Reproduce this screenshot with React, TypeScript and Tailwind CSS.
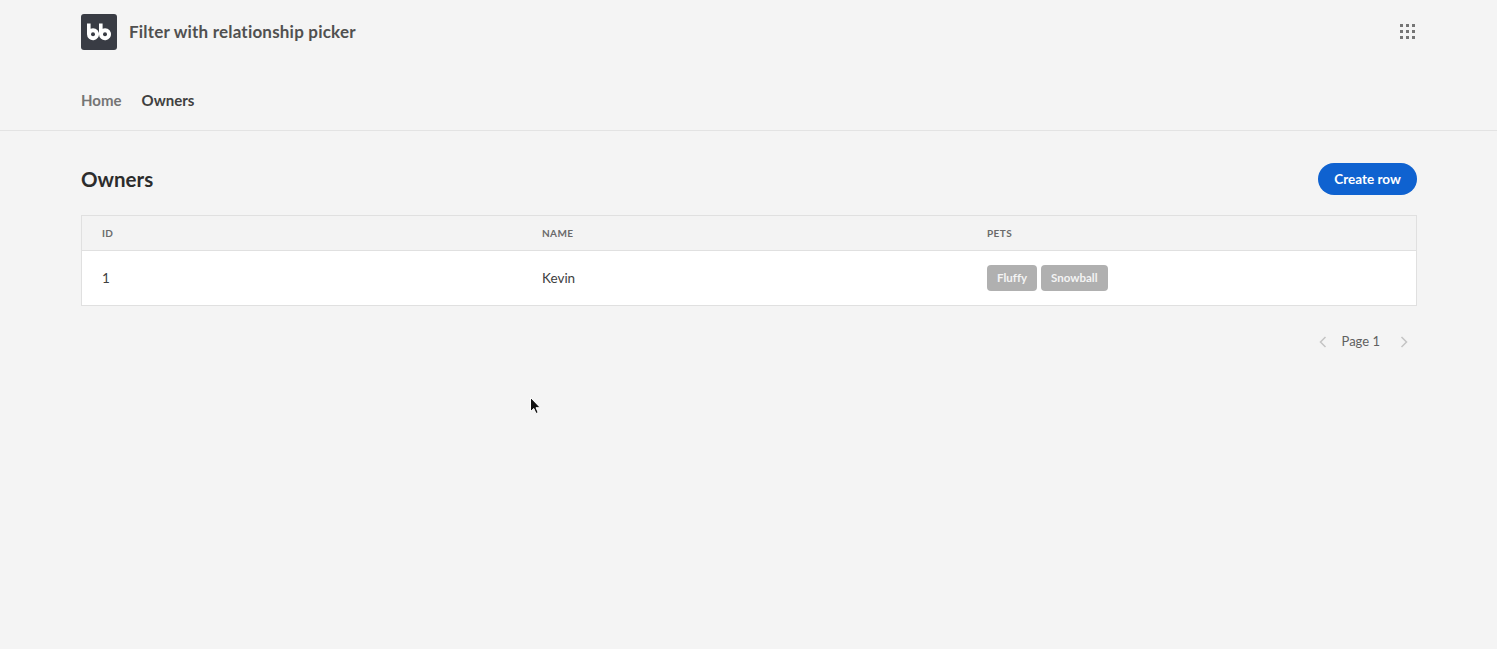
const font = "font-['Lato','Noto_Sans',sans-serif] [font-variant-ligatures:none]";

function Logo() {
  return (
    <div className="flex h-9 w-9 items-center justify-center rounded-[3px] bg-[#393c44]">
      <svg width="26" height="18" viewBox="0 0 26 18" fill="none">
        <path d="M1 0.5h3.6v5.2a6 6 0 1 1-3.6 5.5V0.5Z" fill="#fff" />
        <path d="M13 0.5h3.6v5.2a6 6 0 1 1-3.6 5.5V0.5Z" fill="#fff" />
        <circle cx="7" cy="11.2" r="2" fill="#393c44" />
        <circle cx="19" cy="11.2" r="2" fill="#393c44" />
      </svg>
    </div>
  );
}

function GridIcon() {
  return (
    <svg width="16" height="16" viewBox="0 0 16 16" fill="#757575">
      <rect x="0" y="0" width="3" height="3" />
      <rect x="6" y="0" width="3" height="3" />
      <rect x="12" y="0" width="3" height="3" />
      <rect x="0" y="6" width="3" height="3" />
      <rect x="6" y="6" width="3" height="3" />
      <rect x="12" y="6" width="3" height="3" />
      <rect x="0" y="12" width="3" height="3" />
      <rect x="6" y="12" width="3" height="3" />
      <rect x="12" y="12" width="3" height="3" />
    </svg>
  );
}

function Chevron({ dir }: { dir: "left" | "right" }) {
  return (
    <svg width="8" height="12" viewBox="0 0 8 12" fill="none" stroke="#c4c4c4" strokeWidth="1.5">
      <path d={dir === "left" ? "M6.5 1 1.5 6l5 5" : "M1.5 1l5 5-5 5"} />
    </svg>
  );
}

function Pill({ label }: { label: string }) {
  return (
    <span className="flex h-[26px] items-center rounded-[4px] bg-[#b0b0b0] px-2.5 text-[11.5px] font-bold text-[#f4f4f4]">
      {label}
    </span>
  );
}

export default function App() {
  return (
    <div className={`relative h-[649px] overflow-hidden bg-[#f4f4f4] ${font}`}>
      {/* Top bar */}
      <div className="border-b border-[#e3e3e3] pl-[81px] pr-[80px]">
        <div className="flex items-center justify-between pt-3.5">
          <div className="flex items-center gap-3">
            <Logo />
            <h1 className="text-[17px] font-bold tracking-[0.2px] text-[#505050]">Filter with relationship picker</h1>
          </div>
          <div className="mr-[1px]">
            <GridIcon />
          </div>
        </div>
        <div className="flex h-[80px] items-center gap-5 pt-[20px] text-[15px] font-bold">
          <span className="text-[#757575]">Home</span>
          <span className="text-[#404040]">Owners</span>
        </div>
      </div>

      <div className="pl-[81px] pr-[80px] pt-8">
        <div className="flex items-center justify-between">
          <h2 className="text-[20.5px] font-bold text-[#2c2c2c]">Owners</h2>
          <button className="h-8 w-[99px] rounded-full bg-[#0f62d0] text-[13.5px] font-bold text-white">
            Create row
          </button>
        </div>

        {/* Table */}
        <div className="mt-[20px] border border-[#e0e0e0]">
          <div className="grid h-[35px] grid-cols-[460px_445px_1fr] items-center border-b border-[#e0e0e0] bg-[#f3f3f3] text-[10px] font-bold tracking-[0.04em] text-[#6a6a6a]">
            <span className="pl-5">ID</span>
            <span>NAME</span>
            <span>PETS</span>
          </div>
          <div className="grid h-[54px] grid-cols-[460px_445px_1fr] items-center bg-white text-[13.5px] text-[#404040]">
            <span className="pl-5">1</span>
            <span>Kevin</span>
            <div className="flex gap-1">
              <Pill label="Fluffy" />
              <Pill label="Snowball" />
            </div>
          </div>
        </div>

        {/* Pagination */}
        <div className="mt-[26px] flex items-center justify-end pr-[9px] text-[13px] text-[#606060]">
          <Chevron dir="left" />
          <span className="ml-[15px] mr-[20px]">Page 1</span>
          <Chevron dir="right" />
        </div>
      </div>

      {/* Mouse cursor */}
      <svg className="absolute left-[529px] top-[396px]" width="14" height="20" viewBox="0 0 14 20">
        <path
          d="M1.5 1.5v14l3.3-3 2.2 5 2.2-1-2.2-4.8h4.3L1.5 1.5Z"
          fill="#111"
          stroke="#fff"
          strokeWidth="1"
        />
      </svg>
    </div>
  );
}
